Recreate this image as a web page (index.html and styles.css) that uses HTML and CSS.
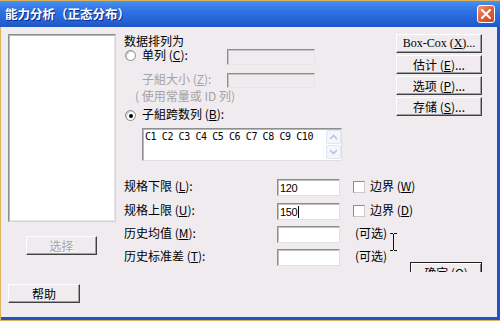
FILE: index.html
```html
<!DOCTYPE html>
<html lang="zh-CN">
<head>
<meta charset="utf-8">
<title>能力分析（正态分布）</title>
<link rel="stylesheet" href="styles.css">
</head>
<body>
<div class="window">
  <div class="titlebar">
    <span class="title">能力分析（正态分布）</span>
    <span class="close"><svg width="10" height="10" viewBox="0 0 10 10"><path d="M1 1 L9 9 M9 1 L1 9" stroke="#fff" stroke-width="2" stroke-linecap="square"/></svg></span>
  </div>
  <div class="client">
    <div class="col-left">
      <div class="listbox"></div>
      <div class="btn btn-select">选择</div>
      <div class="btn btn-help">帮助</div>
    </div>
    <div class="col-mid">
      <div class="heading">数据排列为</div>
      <div class="row r1">
        <span class="radio"></span>
        <span class="label">单列 (<u>C</u>):</span>
        <span class="field-dis"></span>
      </div>
      <div class="row r2">
        <span class="label grey">子組大小 (<u>Z</u>):</span>
        <span class="field-dis short"></span>
      </div>
      <div class="row r3">
        <span class="label grey">( 使用常量或 ID 列)</span>
      </div>
      <div class="row r4">
        <span class="radio on"><span class="dot"></span></span>
        <span class="label">子組跨数列 (<u>B</u>):</span>
      </div>
      <div class="textarea">
        <span class="ta-text">C1 C2 C3 C4 C5 C6 C7 C8 C9 C10</span>
        <span class="sb">
          <span class="sb-btn"><svg width="9" height="6" viewBox="0 0 9 6"><path d="M1 5 L4.5 1.5 L8 5" fill="none" stroke="#B4C4E6" stroke-width="1.6"/></svg></span>
          <span class="sb-btn"><svg width="9" height="6" viewBox="0 0 9 6"><path d="M1 1 L4.5 4.5 L8 1" fill="none" stroke="#B4C4E6" stroke-width="1.6"/></svg></span>
        </span>
      </div>
      <div class="row spec s1">
        <span class="slabel">规格下限 (<u>L</u>):</span>
        <span class="field">120</span>
        <span class="check"></span>
        <span class="ctext">边界 (<u>W</u>)</span>
      </div>
      <div class="row spec s2">
        <span class="slabel">规格上限 (<u>U</u>):</span>
        <span class="field">150<span class="caret"></span></span>
        <span class="check"></span>
        <span class="ctext">边界 (<u>D</u>)</span>
      </div>
      <div class="row spec s3">
        <span class="slabel">历史均值 (<u>M</u>):</span>
        <span class="field"></span>
        <span class="opt">(可选)</span>
      </div>
      <div class="row spec s4">
        <span class="slabel">历史标准差 (<u>T</u>):</span>
        <span class="field"></span>
        <span class="opt">(可选)</span>
      </div>
    </div>
    <div class="col-right">
      <div class="btn rbtn serif">Box-Cox (<u>X</u>)...</div>
      <div class="btn rbtn">估计 (<u>E</u>)...</div>
      <div class="btn rbtn">选项 (<u>P</u>)...</div>
      <div class="btn rbtn">存储 (<u>S</u>)...</div>
      <div class="clip"><div class="btn okbtn">确定 (<u>O</u>)</div></div>
    </div>
  </div>
  <svg class="ibeam" width="7" height="18" viewBox="0 0 7 18"><path d="M0 0.5 H3 M4 0.5 H7 M3.5 1 V17 M0 17.5 H3 M4 17.5 H7" stroke="#111" stroke-width="1" fill="none"/></svg>
</div>
</body>
</html>
```

FILE: styles.css
```css
* { box-sizing: border-box; }
html, body { margin: 0; padding: 0; }
body {
  width: 500px;
  height: 321px;
  overflow: hidden;
  background: #D9B45E;
  font-family: "Noto Sans CJK SC", "Liberation Sans", sans-serif;
  font-size: 12px;
  color: #000;
}
u { text-decoration: underline; text-underline-offset: 1px; }

.window {
  position: relative;
  margin-top: 1px;
  height: 319px;
  display: flex;
  flex-direction: column;
}
.titlebar {
  height: 26px;
  flex: none;
  display: flex;
  align-items: center;
  justify-content: space-between;
  padding: 0 5px 0 5px;
  background: linear-gradient(#4E92F2 0%, #3F86EE 12%, #2E72E2 40%, #2563D6 75%, #1E56C6 100%);
}
.title {
  color: #fff;
  font-weight: 700;
  font-size: 12.5px;
  line-height: 14px;
  text-shadow: 1px 1px 0 #0C2A86;
}
.close {
  width: 18px;
  height: 18px;
  border: 1px solid #fff;
  border-radius: 3px;
  background: linear-gradient(135deg, #F29A76 0%, #E0653C 45%, #C8441E 100%);
  display: flex;
  align-items: center;
  justify-content: center;
}

.client {
  flex: 1;
  display: flex;
  background: #EFEBEF;
  margin-left: 1px;
  border-right: 3px solid #2152C6;
  border-bottom: 3px solid #2152C6;
  padding: 7px 0 0 7px;
}

.btn {
  height: 19px;
  display: flex;
  align-items: center;
  justify-content: center;
  background: #EFEBEF;
  border: 1px solid;
  border-color: #FFFFFF #404040 #404040 #FFFFFF;
  box-shadow: inset -1px -1px 0 #A0A0A0;
  line-height: 13px;
  white-space: nowrap;
}

/* left column */
.col-left {
  width: 108px;
  margin-right: 8px;
  display: flex;
  flex-direction: column;
  flex: none;
}
.listbox {
  width: 108px;
  height: 188px;
  background: #fff;
  border: 1px solid;
  border-color: #8E8E8E #D4D4D4 #D4D4D4 #8E8E8E;
  box-shadow: inset 1px 1px 0 #B8B8B8, inset -1px -1px 0 #E8E8E8;
}
.btn-select {
  width: 71px;
  margin: 14px 0 0 18px;
  color: #A3A3A3;
  text-shadow: 1px 1px 0 #fff;
}
.btn-help {
  width: 72px;
  margin-top: 29px;
}

/* middle column */
.col-mid {
  width: 272px;
  flex: none;
  display: flex;
  flex-direction: column;
}
.heading { line-height: 13px; height: 13px; }
.row { display: flex; align-items: flex-start; }
.label { line-height: 13px; width: 85px; flex: none; white-space: nowrap; }
.grey { color: #A3A3A3; }
.r1 { margin-top: 1px; }
.r2 { margin-top: 7px; padding-left: 18px; }
.r3 { margin-top: 1px; padding-left: 11px; }
.r3 .label { width: auto; }
.r4 { margin-top: 5px; }
.r4 .label { width: auto; }

.radio {
  width: 11px;
  height: 11px;
  flex: none;
  margin: 2px 6px 0 1px;
  border-radius: 50%;
  background: #fff;
  border: 1px solid #8A8A8A;
  box-shadow: inset 1px 1px 0 #C8C8C8;
  display: flex;
  align-items: center;
  justify-content: center;
}
.r4 .radio { margin-top: 3px; }
.dot { width: 4px; height: 4px; border-radius: 50%; background: #000; }

.field-dis {
  width: 88px;
  height: 16px;
  margin-top: 1px;
  flex: none;
  background: #EFEBEF;
  border: 1px solid;
  border-color: #8E8E8E #E6E6E6 #E6E6E6 #8E8E8E;
  box-shadow: inset 1px 1px 0 #C4C4C4;
}
.field-dis.short { height: 15px; }

.textarea {
  margin: 7px 0 0 18px;
  width: 200px;
  height: 33px;
  display: flex;
  background: #fff;
  border: 1px solid;
  border-color: #8E8E8E #E0E0E0 #E0E0E0 #8E8E8E;
  box-shadow: inset 1px 1px 0 #B8B8B8;
  padding: 1px 0 1px 2px;
}
.ta-text {
  flex: 1;
  font-family: "DejaVu Sans Mono", "Liberation Mono", monospace;
  font-size: 10px;
  letter-spacing: -0.42px;
  line-height: 12px;
  padding-top: 1px;
  white-space: nowrap;
}
.sb {
  width: 15px;
  flex: none;
  display: flex;
  flex-direction: column;
  justify-content: space-between;
}
.sb-btn {
  height: 14px;
  display: flex;
  align-items: center;
  justify-content: center;
  background: #F6F6FA;
  border: 1px solid #E2E6F0;
  border-radius: 2px;
}

.spec .slabel { width: 153px; flex: none; line-height: 13px; white-space: nowrap; }
.s1 { margin-top: 18px; }
.s2 { margin-top: 7px; }
.s3 { margin-top: 6px; }
.s4 { margin-top: 6px; }
.field {
  width: 63px;
  height: 17px;
  flex: none;
  background: #fff;
  border: 1px solid;
  border-color: #8E8E8E #E0E0E0 #E0E0E0 #8E8E8E;
  box-shadow: inset 1px 1px 0 #C0C0C0;
  padding: 1px 0 0 2px;
  font-family: "Liberation Sans", sans-serif;
  font-size: 11px;
  letter-spacing: -0.4px;
  line-height: 14px;
  display: flex;
  align-items: center;
}
.caret { width: 1px; height: 12px; background: #000; margin-left: 1px; }
.check {
  width: 12px;
  height: 12px;
  flex: none;
  margin: 2px 0 0 13px;
  background: #fff;
  border: 1px solid;
  border-color: #8E8E8E #C8C8C8 #C8C8C8 #8E8E8E;
}
.ctext { margin-left: 5px; line-height: 13px; white-space: nowrap; }
.opt { margin-left: 15px; line-height: 13px; white-space: nowrap; }

/* right column */
.col-right {
  width: 86px;
  flex: none;
  display: flex;
  flex-direction: column;
}
.rbtn { width: 86px; margin-bottom: 2px; }
.rbtn.serif { font-family: "Liberation Serif", serif; font-size: 12px; }
.clip {
  margin-top: 144px;
  height: 10px;
  overflow: hidden;
  padding-left: 14px;
}
.okbtn {
  width: 72px;
  height: 20px;
  border-color: #202020;
  box-shadow: inset 1px 1px 0 #fff, inset -1px -1px 0 #808080;
}

.ibeam {
  position: absolute;
  left: 390px;
  top: 232px;
}
```
